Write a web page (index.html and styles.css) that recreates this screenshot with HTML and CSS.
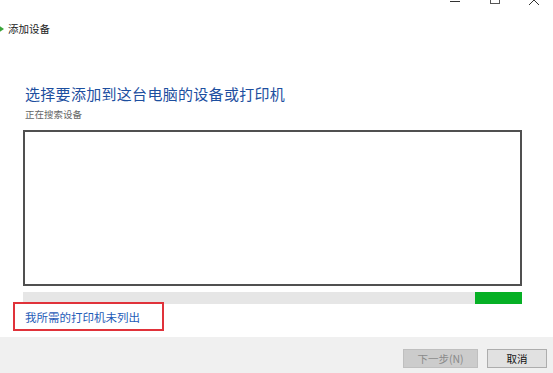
FILE: index.html
```html
<!DOCTYPE html>
<html>
  <head>
    <meta charset="utf-8"/>
    <link rel="stylesheet" href="styles.css">
  </head>
<body>

<div class="window">
  <div class="controls">
    <svg width="110" height="8" viewBox="0 0 110 8">
      <line x1="7" y1="1.5" x2="17" y2="1.5" stroke="#333" stroke-width="1"/>
      <rect x="47.5" y="-5.5" width="9" height="9" fill="none" stroke="#555" stroke-width="1"/>
      <line x1="86" y1="-5" x2="96" y2="5" stroke="#333" stroke-width="1"/>
      <line x1="96" y1="-5" x2="86" y2="5" stroke="#333" stroke-width="1"/>
    </svg>
  </div>

  <div class="titlebar">
    <svg class="back" width="5" height="10" viewBox="0 0 5 10">
      <path d="M-2 1 L4 5 L-2 9 Z" fill="#3aa53a"/>
    </svg>
    <span>添加设备</span>
  </div>

  <div class="content">
    <h1 class="heading">选择要添加到这台电脑的设备或打印机</h1>
    <p class="status">正在搜索设备</p>
    <div class="list"></div>
    <div class="progress">
      <div class="progress_fill"></div>
    </div>
    <div class="missing">
      <a href="#" class="link">我所需的打印机未列出</a>
    </div>
  </div>

  <div class="footer">
    <button class="button button_disabled" disabled>下一步(N)</button>
    <button class="button button_cancel">取消</button>
  </div>
</div>

</body>
</html>
```

FILE: styles.css
```css
* {
  box-sizing: border-box;
}

body {
  margin: 0;
  font-family: "Noto Sans CJK SC", "Noto Sans", sans-serif;
  background-color: #fff;
}

.window {
  width: 553px;
  height: 373px;
  display: flex;
  flex-direction: column;
  overflow: hidden;
}

.controls {
  height: 8px;
  display: flex;
  justify-content: flex-end;
}

.titlebar {
  margin-top: 14px;
  height: 14px;
  display: flex;
  align-items: center;
  font-size: 10.5px;
  line-height: 14px;
  color: #222;
}

.back {
  margin-right: 3px;
}

.content {
  padding-left: 23px;
  width: 522px;
}

.heading {
  margin: 48px 0 0 2px;
  font-size: 15px;
  font-weight: normal;
  letter-spacing: 0.3px;
  line-height: 20px;
  height: 20px;
  color: #1d4f9f;
}

.status {
  margin: 4px 0 0 2px;
  font-size: 9.5px;
  line-height: 12px;
  height: 12px;
  color: #666;
}

.list {
  margin-top: 10px;
  height: 156px;
  border: 2px solid #505050;
  background-color: #fff;
}

.progress {
  margin-top: 6px;
  height: 12px;
  background-color: #e6e6e6;
  display: flex;
  justify-content: flex-end;
}

.progress_fill {
  width: 47px;
  background-color: #06b025;
}

.missing {
  margin: -2px 0 0 -10px;
  width: 151px;
  height: 29px;
  border: 2px solid #e0323a;
  display: flex;
  align-items: center;
  padding-left: 10px;
}

.link {
  font-size: 11.5px;
  color: #1f5cb8;
  text-decoration: none;
  line-height: 14px;
}

.footer {
  margin-top: 6px;
  flex: 1;
  background-color: #f0f0f0;
  display: flex;
  justify-content: flex-end;
  align-items: flex-start;
  gap: 9px;
  padding: 12px 6px 0 0;
}

.button {
  height: 19px;
  font-family: inherit;
  font-size: 10.5px;
  padding: 0;
  border: 1px solid #adadad;
  background-color: #e1e1e1;
  color: #111;
}

.button_disabled {
  width: 75px;
  background-color: #cccccc;
  border-color: #bfbfbf;
  color: #8a8a8a;
}

.button_cancel {
  width: 60px;
}
```
